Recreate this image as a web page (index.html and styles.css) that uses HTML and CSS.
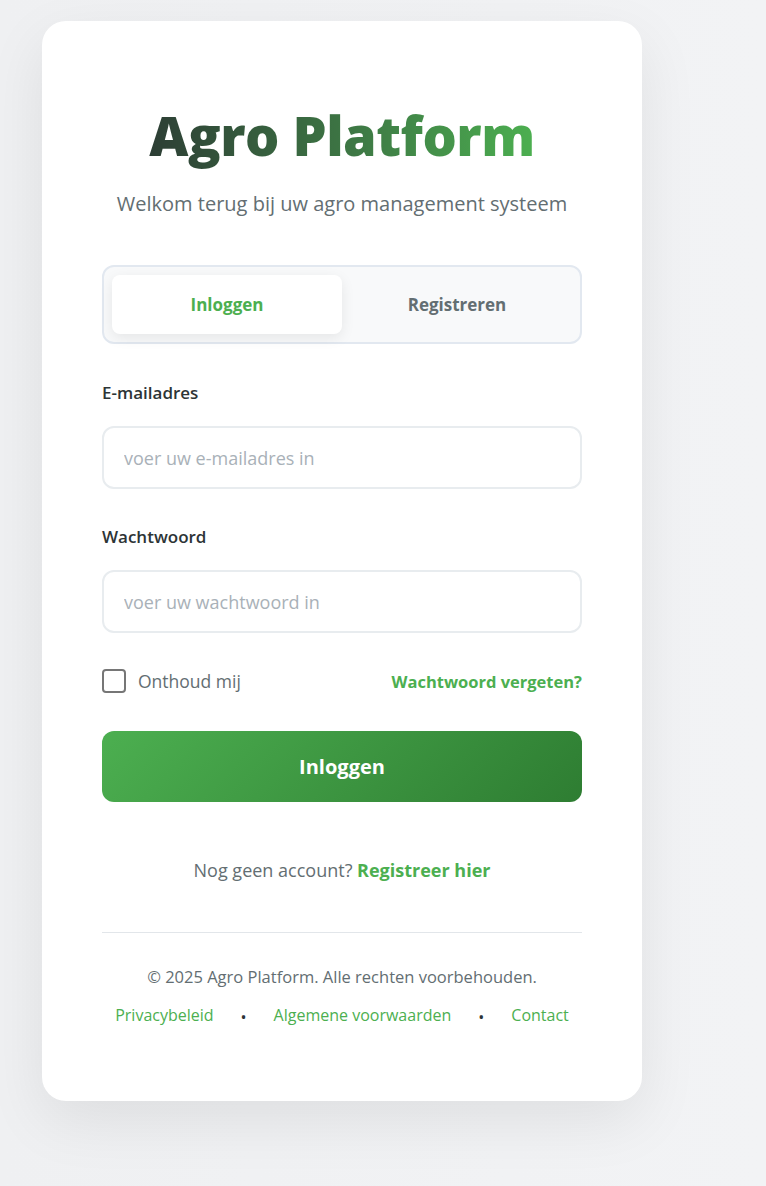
FILE: index.html
```html
<!DOCTYPE html>
<html lang="nl">
<head>
	<meta charset="utf-8">
	<title>Agro Platform - Inloggen</title>
	<link rel="stylesheet" href="styles.css">
</head>
<body>
	<div class="login-card">
		<div class="login-header">
			<h1 class="brand">Agro Platform</h1>
			<p class="subtitle">Welkom terug bij uw agro management systeem</p>
		</div>

		<div class="tabs">
			<button class="tab active">Inloggen</button>
			<button class="tab">Registreren</button>
		</div>

		<form class="login-form">
			<div class="form-group">
				<label for="email">E-mailadres</label>
				<input id="email" type="email" placeholder="voer uw e-mailadres in">
			</div>

			<div class="form-group">
				<label for="password">Wachtwoord</label>
				<input id="password" type="password" placeholder="voer uw wachtwoord in">
			</div>

			<div class="form-options">
				<label class="remember">
					<input type="checkbox">
					<span>Onthoud mij</span>
				</label>
				<a href="#" class="forgot">Wachtwoord vergeten?</a>
			</div>

			<button type="submit" class="submit-button">Inloggen</button>
		</form>

		<p class="signup">Nog geen account? <a href="#">Registreer hier</a></p>

		<div class="card-footer">
			<p class="copyright">© 2025 Agro Platform. Alle rechten voorbehouden.</p>
			<div class="footer-links">
				<a href="#">Privacybeleid</a>
				<span class="dot">•</span>
				<a href="#">Algemene voorwaarden</a>
				<span class="dot">•</span>
				<a href="#">Contact</a>
			</div>
		</div>
	</div>
</body>
</html>
```

FILE: styles.css
```css
* {
	box-sizing: border-box;
}

body {
	margin: 0;
	padding: 21px 42px 84px;
	font-family: 'Open Sans', 'Noto Sans', sans-serif;
	background: linear-gradient(90deg, #eff0f2, #f2f3f5);
	min-height: 100vh;
}

.login-card {
	width: 600px;
	background: #ffffff;
	border-radius: 24px;
	padding: 79px 60px 75px;
	box-shadow: 0 20px 60px rgba(0, 0, 0, 0.08);
}

.login-header {
	text-align: center;
	margin-bottom: 48px;
}

.brand {
	margin: 0 0 20px;
	font-size: 54px;
	font-weight: 800;
	line-height: 1.3;
	letter-spacing: -0.5px;
	background: linear-gradient(90deg, #2d3e35, #3e7a45 55%, #4caf50);
	-webkit-background-clip: text;
	background-clip: text;
	color: transparent;
	display: inline-block;
}

.subtitle {
	margin: 0;
	font-size: 20px;
	line-height: 27px;
	color: #636e72;
}

.tabs {
	display: flex;
	padding: 8px;
	background: #f8f9fa;
	border: 2px solid #e2e8f0;
	border-radius: 12px;
	margin-bottom: 37px;
}

.tab {
	flex: 1;
	height: 59px;
	border: none;
	background: transparent;
	border-radius: 8px;
	font-family: inherit;
	font-size: 17px;
	font-weight: 700;
	color: #636e72;
	cursor: pointer;
}

.tab.active {
	background: #ffffff;
	color: #4caf50;
	box-shadow: 0 4px 14px rgba(0, 0, 0, 0.08);
}

.form-group {
	margin-bottom: 36px;
}

.form-group label {
	display: block;
	font-size: 17px;
	font-weight: 600;
	color: #2d3436;
	margin-bottom: 22px;
}

.form-group input {
	width: 100%;
	height: 63px;
	padding: 0 20px;
	border: 2px solid #e8ecef;
	border-radius: 12px;
	font-family: inherit;
	font-size: 18px;
	color: #2d3436;
	outline: none;
}

.form-group input::placeholder {
	color: #a9b1b8;
}

.form-options {
	display: flex;
	justify-content: space-between;
	align-items: center;
	margin-top: 1px;
	margin-bottom: 38px;
}

.remember {
	display: flex;
	align-items: center;
	gap: 12px;
	font-size: 17.5px;
	color: #636e72;
}

.remember input {
	appearance: none;
	-webkit-appearance: none;
	width: 24px;
	height: 24px;
	margin: 0;
	border: 2px solid #767676;
	border-radius: 4px;
	background: #ffffff;
}

.forgot {
	font-size: 16.5px;
	font-weight: 700;
	color: #4caf50;
	text-decoration: none;
}

.submit-button {
	display: block;
	width: 100%;
	height: 71px;
	border: none;
	border-radius: 12px;
	background: linear-gradient(135deg, #4caf50, #2e7d32);
	color: #ffffff;
	font-family: inherit;
	font-size: 20px;
	font-weight: 700;
	cursor: pointer;
}

.signup {
	text-align: center;
	margin: 56px 0 50px;
	font-size: 18px;
	color: #636e72;
}

.signup a {
	color: #4caf50;
	font-weight: 700;
	text-decoration: none;
}

.card-footer {
	border-top: 1px solid #e2e6ea;
	padding-top: 32px;
	text-align: center;
}

.copyright {
	margin: 0 0 16px;
	font-size: 16.5px;
	color: #636e72;
}

.footer-links {
	display: flex;
	justify-content: center;
	align-items: center;
	gap: 27px;
	font-size: 16px;
}

.footer-links a {
	color: #4caf50;
	text-decoration: none;
}

.dot {
	color: #2d3436;
	font-size: 16px;
	position: relative;
	top: 2px;
}
```
